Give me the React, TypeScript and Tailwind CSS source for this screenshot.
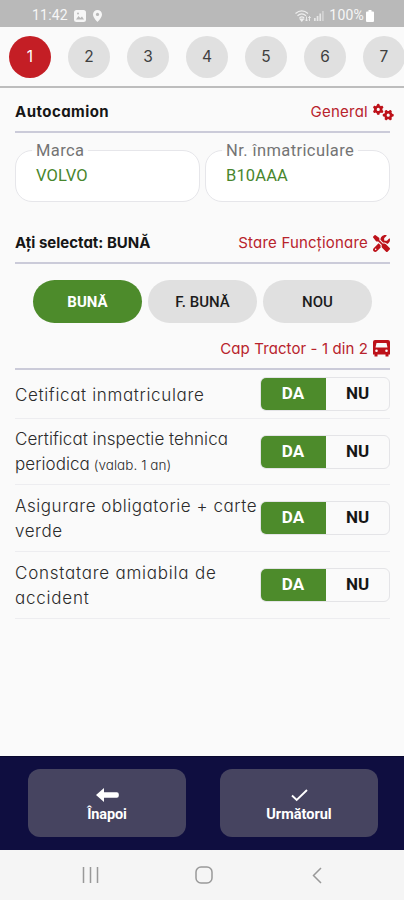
import { useState } from 'react';
import type { ReactNode } from 'react';
import { FaGears, FaScrewdriverWrench } from 'react-icons/fa6';

interface Item {
  label: string;
  second?: string;
  note?: string;
  height: string;
  spacing: string;
}

const steps = [1, 2, 3, 4, 5, 6, 7];
const states = ['BUNĂ', 'F. BUNĂ', 'NOU'];

const items: Item[] = [
  { label: 'Cetificat inmatriculare', height: 'h-[49px]', spacing: 'tracking-[0.65px]' },
  { label: 'Certificat inspectie tehnica', second: 'periodica', note: '(valab. 1 an)', height: 'h-[66px]', spacing: 'tracking-[0.05px]' },
  { label: 'Asigurare obligatorie + carte', second: 'verde', height: 'h-[67px]', spacing: 'tracking-[0.54px]' },
  { label: 'Constatare amiabila de', second: 'accident', height: 'h-[67px]', spacing: 'tracking-[0.77px]' },
];

function StatusBar() {
  return (
    <div className="flex h-[27px] shrink-0 items-center bg-[#b9b9b9] pt-[4px] pl-[32px] pr-[30px] font-[Roboto] text-[14px] text-[#f6f6f6]">
      <span className="tracking-[0.2px]">11:42</span>
      <svg className="ml-[6px]" width="12" height="12" viewBox="0 0 12 12">
        <rect width="12" height="12" rx="2.5" fill="#f6f6f6" />
        <path d="M2 9.5 4.5 6l1.800 2 1.700-1.500 2 3Z" fill="#b9b9b9" />
        <circle cx="4" cy="3.6" r="1" fill="#b9b9b9" />
      </svg>
      <svg className="ml-[7px]" width="9" height="12" viewBox="0 0 9 12">
        <path d="M4.5 0A4.5 4.5 0 0 0 0 4.5C0 7.5 4.5 12 4.5 12S9 7.5 9 4.5A4.5 4.5 0 0 0 4.5 0Z" fill="#f6f6f6" />
        <circle cx="4.5" cy="4.4" r="1.6" fill="#b9b9b9" />
      </svg>
      <svg className="ml-auto" width="16" height="12" viewBox="0 0 16 12" fill="none" stroke="#eeeeee" strokeWidth="1.2">
        <path d="M.5 3.500c4-3.400 8.500-3.400 12.500 0M2.500 5.800c2.700-2.300 5.800-2.300 8.500 0M4.500 8c1.500-1.300 3.200-1.300 4.700 0" />
        <path d="M6.800 11 5.300 9.200h3Z" fill="#eeeeee" />
        <path d="M11.500 6.500v4.500M10 9.500l1.500 1.500L13 9.500M14.500 11V6.500M13.300 8l1.200-1.500L15.700 8" strokeWidth=".9" />
      </svg>
      <svg className="ml-[3px]" width="10" height="11" viewBox="0 0 10 11" fill="#e6e6e6">
        <path d="M0 8h1.700v3H0zM2.700 6h1.700v5H2.700zM5.400 3.500h1.700V11H5.400z" />
        <path d="M8.100 1h1.600v10H8.100z" opacity=".6" />
      </svg>
      <span className="ml-[5px] tracking-[0.2px]">100%</span>
      <svg className="ml-[2px]" width="8" height="12" viewBox="0 0 8 12">
        <path d="M2.500 0h3v1.500H7a1 1 0 0 1 1 1V11a1 1 0 0 1-1 1H1a1 1 0 0 1-1-1V2.500a1 1 0 0 1 1-1h1.500Z" fill="#ffffff" />
      </svg>
    </div>
  );
}

function SectionHeader({ title, label, icon, className }: { title?: ReactNode; label: ReactNode; icon: ReactNode; className: string }) {
  return (
    <div className={`flex items-center justify-between border-[#cbcbd9] leading-5 ${className}`}>
      <h2 className="text-[15px] font-bold text-[#161616]">{title}</h2>
      <div className="flex items-center gap-[5px] text-[15px] text-[#b8232c]">
        {label}
        {icon}
      </div>
    </div>
  );
}

function Field({ label, value }: { label: string; value: string }) {
  return (
    <div className="relative h-[52px] flex-1 rounded-[17px] border border-[#e6e6ea] bg-white pl-[20px] pt-[14px] font-[Roboto]">
      <span className="absolute left-[16px] -top-[11px] bg-linear-to-b from-[#fafafa] from-50% to-white to-50% px-[4px] text-[16.500px] leading-[22px] tracking-[0.4px] text-[#747474]">{label}</span>
      <span className="block text-[16.500px] leading-[22px] tracking-[0.15px] text-[#48862d]">{value}</span>
    </div>
  );
}

function Toggle() {
  const [yes, setYes] = useState(true);
  return (
    <div className="flex h-[34px] w-[130px] shrink-0 overflow-hidden rounded-[6px] border border-[#e4e4e7] font-[Roboto] text-[17px] font-bold">
      <button onClick={() => setYes(true)} className={yes ? '-my-px -ml-px w-[66px] bg-[#4d8b2b] text-white' : 'w-[65px] text-[#161616]'}>DA</button>
      <button onClick={() => setYes(false)} className={yes ? 'flex-1 text-[#161616]' : 'flex-1 bg-[#4d8b2b] text-white'}>NU</button>
    </div>
  );
}

export default function App() {
  const [step, setStep] = useState(1);
  const [state, setState] = useState('BUNĂ');

  return (
    <div className="flex h-[900px] w-[404px] flex-col overflow-hidden bg-[#fafafa] font-[Inter,sans-serif] [font-feature-settings:'cv11']">
      <StatusBar />
      <div className="flex h-[61px] shrink-0 gap-[17px] overflow-hidden border-b-2 border-[#bdbdbd] pl-[9px] pt-[9px]">
        {steps.map((n) => (
          <button key={n} onClick={() => setStep(n)} className={`size-[42px] shrink-0 rounded-full text-[15.500px] ${n === step ? 'bg-[#c41e25] text-white' : 'bg-[#e0e0e0] text-[#3f3f3f]'}`}>
            {n}
          </button>
        ))}
      </div>

      <main className="flex-1 pl-[15px] pr-[14px]">
        <SectionHeader
          className="h-[45px] border-b-2 pt-[5px]"
          title={<span className="tracking-[0.45px]">Autocamion</span>}
          label={<span className="tracking-[0.25px]">General</span>}
          icon={<FaGears className="-mr-[4px] h-[18px] w-[21px] text-[#bd1119]" />}
        />
        <div className="mt-[17px] flex gap-[5px]">
          <Field label="Marca" value="VOLVO" />
          <Field label="Nr. înmatriculare" value="B10AAA" />
        </div>
        <SectionHeader
          className="mt-[20px] h-[42px] border-b-2 pt-[2px]"
          title="Ați selectat: BUNĂ"
          label={<span className="tracking-[0.2px]">Stare Funcționare</span>}
          icon={<FaScrewdriverWrench className="size-[17px] text-[#bd1119]" />}
        />
        <div className="mt-[16px] flex gap-[6px] pl-[18px] font-[Roboto]">
          {states.map((s) => (
            <button key={s} onClick={() => setState(s)} className={`h-[43px] w-[109px] rounded-full pt-px text-[15px] ${s === state ? 'bg-[#4d8b2b] font-bold text-white' : 'bg-[#e0e0e0] font-medium text-[#1c1c1c]'}`}>
              {s}
            </button>
          ))}
        </div>
        <SectionHeader
          className="mt-[5px] h-[42px] border-b-2 pt-[1px]"
          label={<span className="tracking-[0.1px]">Cap Tractor - 1 din 2</span>}
          icon={
            <svg width="17" height="17" viewBox="0 0 17 17" fill="#bd1119">
              <path fillRule="evenodd" d="M2 0h13a2 2 0 0 1 2 2v12.500h-1.500v2h-3v-2h-8v2h-3v-2H0V2a2 2 0 0 1 2-2Zm1.500 3L2.500 7.500h12L13.500 3ZM3.500 9.500a1.300 1.300 0 1 0 0 2.600 1.300 1.300 0 0 0 0-2.600Zm10 0a1.300 1.300 0 1 0 0 2.600 1.300 1.300 0 0 0 0-2.600Z" />
            </svg>
          }
        />
        {items.map((item) => (
          <div key={item.label} className={`flex items-center justify-between border-b border-[#ededf0] ${item.height}`}>
            <div className={`w-0 whitespace-nowrap pt-[2px] text-[17px] leading-[25px] font-light text-[#2b2b2b] ${item.spacing}`}>
              {item.label}
              {item.second && <br />}
              {item.second}
              {item.note && <span className="text-[13.500px]"> {item.note}</span>}
            </div>
            <Toggle />
          </div>
        ))}
      </main>

      <footer className="flex h-[94px] shrink-0 gap-[34px] border-t border-[#08082e] bg-[#0f0e40] pl-[28px] pt-[12px] font-[Roboto] text-[14.500px] font-bold text-white">
        <button className="flex h-[68px] w-[158px] flex-col items-center rounded-[12px] bg-[#464460] pt-[19px]">
          <svg width="23" height="15" viewBox="0 0 23 15">
            <path d="M0 7 8 0v4.200h12.800a2 2 0 0 1 2 2v1.600a2 2 0 0 1-2 2H8V14Z" fill="#ffffff" />
          </svg>
          <span className="pt-[2px] leading-[20px] tracking-[-0.1px]">Înapoi</span>
        </button>
        <button className="flex h-[68px] w-[158px] flex-col items-center rounded-[12px] bg-[#464460] pt-[19px]">
          <svg width="17" height="15" viewBox="0 0 17 15" fill="none" stroke="#ffffff" strokeWidth="1.900">
            <path d="m1 7.500 4.700 4.500L16 2" />
          </svg>
          <span className="pt-[2px] leading-[20px]">Următorul</span>
        </button>
      </footer>
      <nav className="flex h-[50px] shrink-0 items-center bg-[#f5f5f5] pl-[82px]">
        <svg width="17" height="16" viewBox="0 0 17 16" stroke="#999999" strokeWidth="1.500">
          <path d="M1.500 0v16M8.500 0v16M15.500 0v16" />
        </svg>
        <svg className="ml-[96px]" width="18" height="18" viewBox="0 0 18 18" fill="none" stroke="#999999" strokeWidth="1.500">
          <rect x="1" y="1" width="16" height="16" rx="5" />
        </svg>
        <svg className="ml-[99px]" width="10" height="17" viewBox="0 0 10 17" fill="none" stroke="#999999" strokeWidth="1.500">
          <path d="M9 1 1.500 8.500 9 16" />
        </svg>
      </nav>
    </div>
  );
}
